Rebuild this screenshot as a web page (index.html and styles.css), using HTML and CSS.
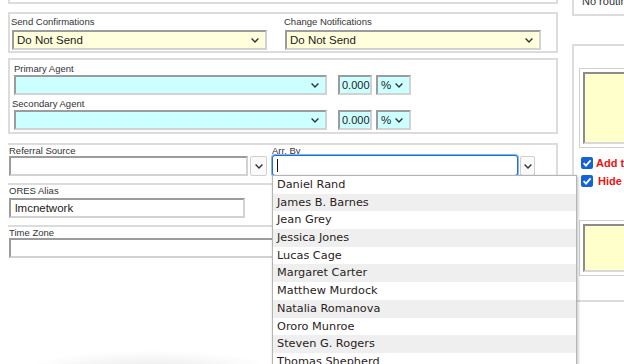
FILE: index.html
```
<!DOCTYPE html>
<html lang="en">
<head>
  <meta charset="UTF-8"/>
  <title>Booking - Routing</title>
  <link rel="stylesheet" href="styles.css">
</head>
<body>
  <div class="page">
    <div class="main">
      <div class="panel stub"></div>

      <div class="panel send">
        <div class="field">
          <label>Send Confirmations</label>
          <div class="select yellow"><span>Do Not Send</span><svg class="chev" viewBox="0 0 8 5"><polyline points="0.6,0.6 4,4 7.4,0.6"/></svg></div>
        </div>
        <div class="field">
          <label>Change Notifications</label>
          <div class="select yellow"><span>Do Not Send</span><svg class="chev" viewBox="0 0 8 5"><polyline points="0.6,0.6 4,4 7.4,0.6"/></svg></div>
        </div>
      </div>

      <div class="panel agents">
        <label>Primary Agent</label>
        <div class="agent-row">
          <div class="select cyan agent-name"><span></span><svg class="chev" viewBox="0 0 8 5"><polyline points="0.6,0.6 4,4 7.4,0.6"/></svg></div>
          <div class="box cyan pct-val">0.000</div>
          <div class="select cyan pct-type"><span>%</span><svg class="chev" viewBox="0 0 8 5"><polyline points="0.6,0.6 4,4 7.4,0.6"/></svg></div>
        </div>
        <label class="second">Secondary Agent</label>
        <div class="agent-row">
          <div class="select cyan agent-name"><span></span><svg class="chev" viewBox="0 0 8 5"><polyline points="0.6,0.6 4,4 7.4,0.6"/></svg></div>
          <div class="box cyan pct-val">0.000</div>
          <div class="select cyan pct-type"><span>%</span><svg class="chev" viewBox="0 0 8 5"><polyline points="0.6,0.6 4,4 7.4,0.6"/></svg></div>
        </div>
      </div>

      <div class="section referral">
        <div class="field">
          <label>Referral Source</label>
          <div class="combo">
            <div class="box ref-input"></div>
            <div class="drop-btn ref-btn"><svg class="chev" viewBox="0 0 8 5"><polyline points="0.6,0.6 4,4 7.4,0.6"/></svg></div>
          </div>
        </div>
        <div class="field arr-field">
          <label>Arr. By</label>
          <div class="combo">
            <div class="box arr-input"><span class="caret"></span></div>
            <div class="drop-btn arr-btn"><svg class="chev" viewBox="0 0 8 5"><polyline points="0.6,0.6 4,4 7.4,0.6"/></svg></div>
          </div>
        </div>
      </div>

      <div class="section ores">
        <label>ORES Alias</label>
        <div class="box ores-input">lmcnetwork</div>
      </div>

      <div class="section tz">
        <label>Time Zone</label>
        <div class="box tz-input"></div>
      </div>
    </div>

    <div class="side">
      <div class="side-top"><p>No routing rules</p></div>
      <div class="side-panel">
        <div class="frame"><div class="note tall"></div></div>
        <div class="check-row"><span class="cb"><svg viewBox="0 0 12 12"><polyline points="2.6,6.2 5,8.6 9.6,3.4"/></svg></span><span class="cb-text">Add to Group</span></div>
        <div class="check-row second"><span class="cb"><svg viewBox="0 0 12 12"><polyline points="2.6,6.2 5,8.6 9.6,3.4"/></svg></span><span class="cb-text">Hide Rates</span></div>
        <div class="frame lower"><div class="note short"></div></div>
      </div>
    </div>
  </div>

  <ul class="suggest">
    <li>Daniel Rand</li>
    <li>James B. Barnes</li>
    <li>Jean Grey</li>
    <li>Jessica Jones</li>
    <li>Lucas Cage</li>
    <li>Margaret Carter</li>
    <li>Matthew Murdock</li>
    <li>Natalia Romanova</li>
    <li>Ororo Munroe</li>
    <li>Steven G. Rogers</li>
    <li>Thomas Shepherd</li>
    <li>Wanda Maximoff</li>
  </ul>
</body>
</html>
```

FILE: styles.css
```
/* ===== Global ===== */
* { margin: 0; padding: 0; box-sizing: border-box; }
body {
  width: 624px;
  height: 364px;
  overflow: hidden;
  position: relative;
  font-family: 'Liberation Sans', Arial, sans-serif;
  color: #222;
  background:
    radial-gradient(ellipse 130px 22px at 150px 372px, rgba(0,0,0,0.09), rgba(0,0,0,0) 100%),
    #fff;
}

.page { display: flex; padding-left: 8px; }
.main { width: 550px; flex: none; }
.side { width: 80px; flex: none; margin-left: 14px; }

label {
  display: block;
  font-size: 9.5px;
  line-height: 11px;
  color: #333;
  white-space: nowrap;
}

/* ===== Inputs ===== */
.box, .select {
  height: 20px;
  border: 2px solid;
  border-color: #9c9c9c #d2d2d2 #d2d2d2 #9c9c9c;
  font-size: 11.5px;
  line-height: 16px;
  padding: 0 3px;
  background: #fff;
  white-space: nowrap;
  overflow: hidden;
}
.select { display: flex; align-items: center; }
.select span { flex: 1; }
.yellow { background: #ffffdc; }
.cyan { background: #ccffff; }

.chev {
  width: 8px;
  height: 5px;
  flex: none;
  margin-right: 3px;
  fill: none;
  stroke: #333;
  stroke-width: 1.4;
}

/* ===== Panels ===== */
.panel { border: 2px solid #dcdcdc; }
.stub { height: 4px; border-top: none; }

.send {
  margin-top: 8px;
  padding: 2px 14px 1px 2px;
  display: grid;
  grid-template-columns: 255px 256px;
  column-gap: 18px;
}
.send label { margin-left: -1px; margin-bottom: 3px; }

.agents {
  margin-top: 5px;
  padding: 3px 0 2px 4px;
}
.agents label { line-height: 12px; }
.agents label.second { margin-top: 3px; margin-left: -2px; }
.agent-row { display: flex; }
.agent-row .agent-name { width: 313px; }
.agent-row .pct-val {
  width: 34px;
  margin-left: 11px;
  padding: 0 0 0 2px;
  font-size: 11px;
}
.agent-row .pct-type { width: 35px; margin-left: 4px; }

.section { border-top: 2px solid #dcdcdc; padding-left: 1px; }
.referral {
  margin-top: 9px;
  border-right: 2px solid #dcdcdc;
  padding-bottom: 7px;
  display: flex;
}
.arr-field { margin-left: 5px; }
.combo { display: flex; }
.ores { padding-bottom: 7px; }
.ores label { line-height: 12px; margin-bottom: 1px; }

.ref-input { width: 239px; }
.drop-btn {
  height: 20px;
  margin-left: 2px;
  border: 1px solid #cfcfcf;
  border-radius: 2px;
  background: #fafafa;
  display: flex;
  align-items: center;
  justify-content: center;
}
.drop-btn .chev { margin-right: 0; }
.ref-btn { width: 17px; }
.arr-btn { width: 15px; }

.box.arr-input {
  width: 246px;
  height: 21px;
  margin-top: -1px;
  border: 1px solid #1d6fd8;
  border-radius: 3px;
  box-shadow: 0 0 0 1px #86b4ee;
  padding: 3px 4px;
}
.caret { display: block; width: 1px; height: 13px; background: #111; }

.box.ores-input { width: 236px; padding-left: 4px; }
.tz-input { width: 400px; }

/* ===== Right column ===== */
.side-top {
  height: 16px;
  border: 2px solid #dcdcdc;
  border-top: none;
  border-right: none;
  padding-left: 8px;
  overflow: hidden;
}
.side-top p {
  margin-top: -5px;
  font-size: 11px;
  line-height: 12px;
  color: #333;
  white-space: nowrap;
}
.side-panel {
  margin-top: 28px;
  border: 2px solid #dcdcdc;
  border-right: none;
  padding: 22px 0 24px 5px;
}
.frame { border: 1px solid #cfcfcf; padding: 3px; border-right: none; }
.frame.lower { margin-top: 33px; }
.note {
  background: #ffffcc;
  border: 2px solid;
  border-color: #8c8c8c #d8d8d8 #d8d8d8 #8c8c8c;
  border-right: none;
}
.note.tall { height: 72px; }
.note.short { height: 48px; }

.check-row {
  display: flex;
  align-items: center;
  height: 12px;
  margin-top: 9px;
  margin-left: 2px;
  white-space: nowrap;
}
.check-row.second { margin-top: 6px; }
.cb {
  width: 12px;
  height: 12px;
  flex: none;
  border-radius: 2px;
  background: #1463d6;
  display: flex;
}
.cb svg { width: 12px; height: 12px; fill: none; stroke: #fff; stroke-width: 1.8; }
.cb-text { margin-left: 3px; color: #f01010; font-weight: bold; font-size: 11px; }
.check-row.second .cb-text { margin-left: 5px; }

/* ===== Suggestion list ===== */
.suggest {
  position: absolute;
  left: 272px;
  top: 175px;
  width: 305px;
  height: 200px;
  list-style: none;
  background: #fff;
  border: 1px solid #b4b4b4;
  box-shadow: 1px 1px 3px rgba(0,0,0,0.25);
  overflow: hidden;
}
.suggest li {
  height: 17.7px;
  line-height: 17.7px;
  padding-left: 4px;
  font-family: 'DejaVu Sans', Verdana, sans-serif;
  font-size: 11.3px;
  color: #2a2222;
  white-space: nowrap;
}
.suggest li:nth-child(even) { background: #efefef; }
```
